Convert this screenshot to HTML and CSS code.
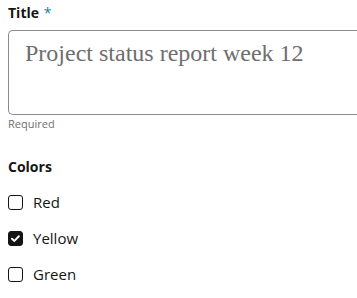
FILE: index.html
```html
<!DOCTYPE html>
<html>
<head>
<meta charset="utf-8">
<link rel="stylesheet" href="styles.css">
</head>
<body>
<div class="form">
  <div class="field">
    <div class="label">Title <span class="req">*</span></div>
    <div class="textbox">Project status report week 12</div>
    <div class="help">Required</div>
  </div>
  <div class="group">
    <div class="label">Colors</div>
    <div class="options">
      <div class="option"><span class="box"></span><span class="opt-text">Red</span></div>
      <div class="option"><span class="box checked"><svg viewBox="0 0 16 16" width="15" height="15"><path d="M4.2 8.2 L6.8 10.6 L11.6 5.6" fill="none" stroke="#fff" stroke-width="2" stroke-linecap="round" stroke-linejoin="round"/></svg></span><span class="opt-text">Yellow</span></div>
      <div class="option"><span class="box"></span><span class="opt-text">Green</span></div>
    </div>
  </div>
</div>
</body>
</html>
```
FILE: styles.css
```css
html, body {
  margin: 0;
  padding: 0;
  background: #fff;
}
body {
  font-family: "Open Sans", "Noto Sans", sans-serif;
  color: #161513;
  overflow: hidden;
}
.form {
  padding: 3px 0 0 8px;
}
.label {
  font-size: 14px;
  font-weight: 700;
  line-height: 20px;
}
.req {
  color: #227e9e;
  font-weight: 400;
  margin-left: 1px;
}
.textbox {
  margin-top: 7px;
  box-sizing: border-box;
  width: 100%;
  height: 85px;
  border: 1px solid #8b8b8b;
  border-right: none;
  border-radius: 5px 0 0 5px;
  padding: 7px 0 0 16px;
  font-family: "Liberation Serif", serif;
  font-size: 24px;
  line-height: 30px;
  color: #6e6e6e;
  white-space: nowrap;
  overflow: hidden;
}
.help {
  margin-top: 1px;
  font-size: 11px;
  line-height: 16px;
  color: #6f6f6f;
}
.group {
  margin-top: 25px;
}
.options {
  margin-top: 14px;
  display: flex;
  flex-direction: column;
  gap: 14px;
}
.option {
  display: flex;
  align-items: center;
  height: 22px;
}
.box {
  box-sizing: border-box;
  width: 15px;
  height: 15px;
  border: 1.5px solid #161513;
  border-radius: 3px;
  display: flex;
  align-items: center;
  justify-content: center;
  flex: none;
}
.box.checked {
  background: #161513;
}
.box svg {
  display: block;
  flex: none;
}
.opt-text {
  margin-left: 10px;
  font-size: 15px;
  line-height: 22px;
}
```
